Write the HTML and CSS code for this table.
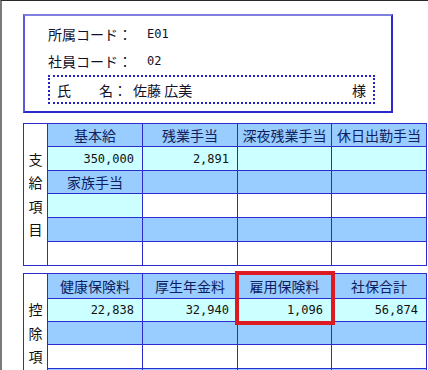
FILE: index.html
```html
<!DOCTYPE html>
<html lang="ja">
<head>
  <meta charset="UTF-8">
  <title>給与明細</title>
  <link rel="stylesheet" href="styles.css">
</head>
<body>
  <div class="page">

    <!-- 社員情報 -->
    <div class="info">
      <div class="info-row"><span class="info-label">所属コード：</span><span class="info-value">E01</span></div>
      <div class="info-row"><span class="info-label">社員コード：</span><span class="info-value">02</span></div>
      <div class="name-box">
        <span class="name-label">氏　　名：</span>
        <span class="name-value">佐藤 広美</span>
        <span class="name-suffix">様</span>
      </div>
    </div>

    <!-- 支給項目 -->
    <div class="sheet">
      <div class="side">支<br>給<br>項<br>目</div>
      <div class="cell head">基本給</div>
      <div class="cell head">残業手当</div>
      <div class="cell head">深夜残業手当</div>
      <div class="cell head">休日出勤手当</div>

      <div class="cell amount num">350,000</div>
      <div class="cell amount num">2,891</div>
      <div class="cell amount num"></div>
      <div class="cell amount num"></div>

      <div class="cell head">家族手当</div>
      <div class="cell head"></div>
      <div class="cell head"></div>
      <div class="cell head"></div>

      <div class="cell amount num"></div>
      <div class="cell"></div>
      <div class="cell"></div>
      <div class="cell"></div>

      <div class="cell head"></div>
      <div class="cell head"></div>
      <div class="cell head"></div>
      <div class="cell head"></div>

      <div class="cell"></div>
      <div class="cell"></div>
      <div class="cell"></div>
      <div class="cell"></div>
    </div>

    <!-- 控除項目 -->
    <div class="sheet-wrap">
      <div class="sheet sheet-deduct">
        <div class="side">控<br>除<br>項<br>目</div>
        <div class="cell head">健康保険料</div>
        <div class="cell head">厚生年金料</div>
        <div class="cell head">雇用保険料</div>
        <div class="cell head">社保合計</div>

        <div class="cell amount num">22,838</div>
        <div class="cell amount num">32,940</div>
        <div class="cell amount num">1,096</div>
        <div class="cell amount num">56,874</div>

        <div class="cell head"></div>
        <div class="cell head"></div>
        <div class="cell head"></div>
        <div class="cell head"></div>

        <div class="cell"></div>
        <div class="cell"></div>
        <div class="cell"></div>
        <div class="cell"></div>

        <div class="cell head"></div>
        <div class="cell head"></div>
        <div class="cell head"></div>
        <div class="cell head"></div>

        <div class="cell"></div>
        <div class="cell"></div>
        <div class="cell"></div>
        <div class="cell"></div>
      </div>
      <!-- 雇用保険料の強調枠 -->
      <div class="mark"></div>
    </div>

  </div>
</body>
</html>
```

FILE: styles.css
```css
/* 全体 */
html, body {
  margin: 0;
  padding: 0;
  background: #fff;
}

body {
  font-family: "Noto Sans CJK JP", sans-serif;
  font-size: 14px;
  color: #10102a;
  overflow: hidden;
}

.page {
  height: 100vh;
  border-top: 1px solid #2a2a2a;
  border-left: 2px solid #7a7a7a;
  box-sizing: border-box;
  overflow: hidden;
}

/* 社員情報の枠 */
.info {
  box-sizing: border-box;
  width: 370px;
  height: 99px;
  margin: 13px 0 0 21px;
  padding: 4px 16px 0 23px;
  border: 2px solid #2a2acc;
  border-top-color: #8080e0;
  border-left-color: #5a5ad8;
}

.info-row {
  display: flex;
  align-items: center;
  height: 27px;
}

.info-label {
  width: 84px;
}

.info-value {
  margin-left: 15px;
  font-family: "DejaVu Sans Mono", monospace;
  font-size: 12px;
}

.name-box {
  display: flex;
  align-items: center;
  box-sizing: border-box;
  height: 29px;
  margin-top: 1px;
  padding: 0 7px;
  border: 2px dotted #2424c4;
}

.name-value {
  margin-left: 6px;
  flex: 1;
}

/* 明細表 */
.sheet {
  display: grid;
  grid-template-columns: 23px 94px 94px 93px 94px;
  grid-template-rows: 22px 23px 22px 23px 23px 23px;
  gap: 1px;
  padding: 1px;
  width: 404px;
  box-sizing: border-box;
  margin: 10px 0 0 21px;
  background: #2b2bd0;
}

.sheet-wrap {
  position: relative;
  margin-top: 7px;
}

.sheet-deduct {
  margin-top: 0;
  grid-template-rows: 24px 22px 22px 23px 23px 23px;
}

.side {
  grid-row: 1 / -1;
  display: flex;
  align-items: center;
  justify-content: center;
  text-align: center;
  line-height: 23.5px;
  background: #fff;
  color: #111;
}

.cell {
  display: flex;
  align-items: center;
  justify-content: center;
  background: #fff;
  white-space: nowrap;
}

.head {
  background: #99ccff;
  color: #0e1e5e;
}

.amount {
  background: #ccffff;
}

.num {
  justify-content: flex-end;
  padding-right: 8px;
  font-family: "DejaVu Sans Mono", monospace;
  font-size: 12px;
  color: #111;
}

/* 強調枠 */
.mark {
  position: absolute;
  left: 233px;
  top: -2px;
  width: 100px;
  height: 54px;
  box-sizing: border-box;
  border: 4px solid #dd1a22;
}
```
